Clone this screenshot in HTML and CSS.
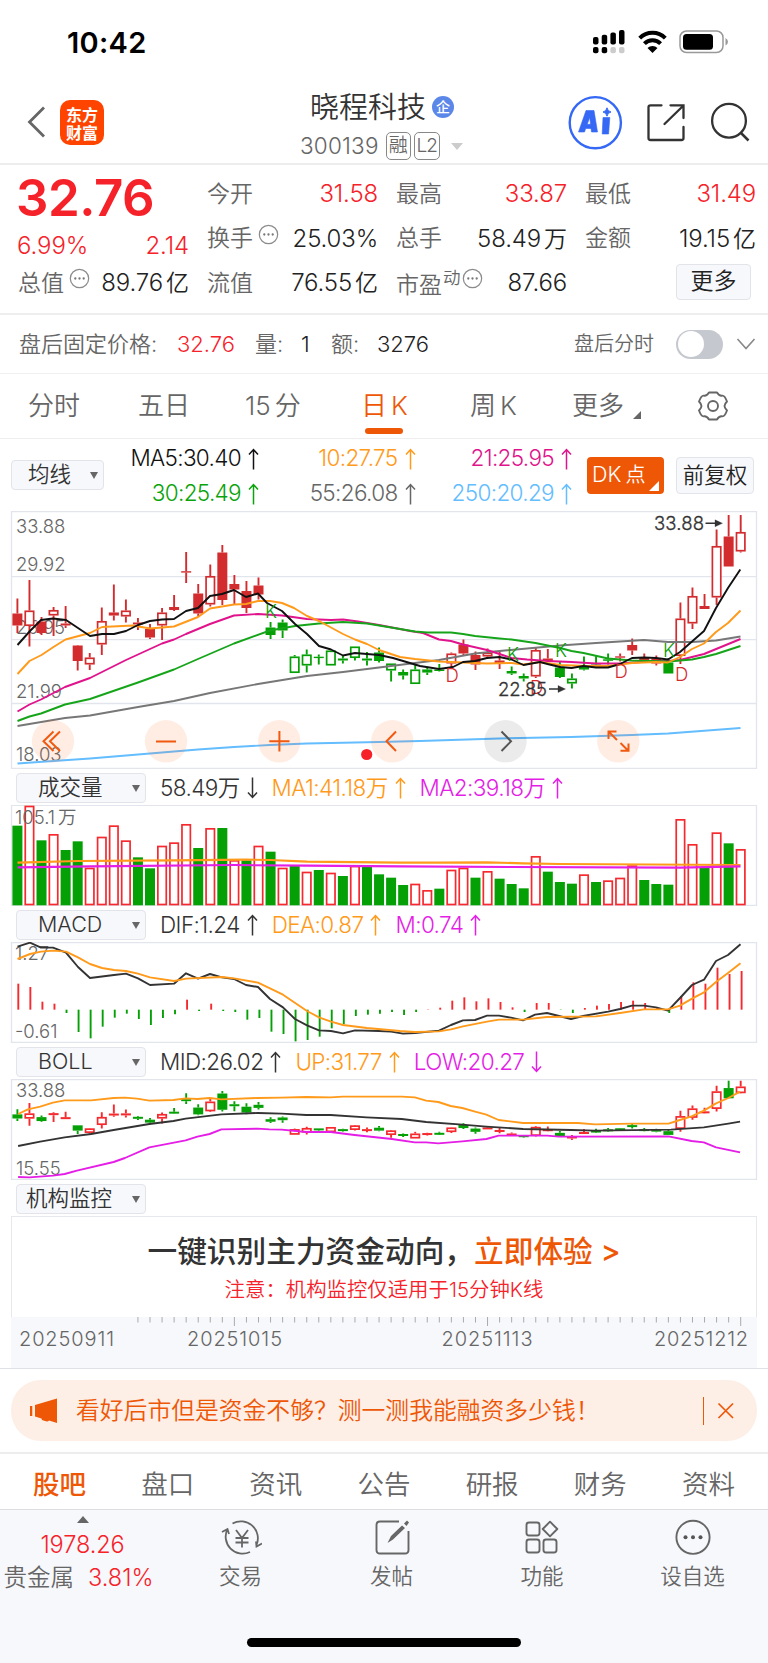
FILE: index.html
```html
<!DOCTYPE html>
<html lang="zh-CN">
<head>
<meta charset="utf-8">
<title>晓程科技 300139</title>
<link rel="stylesheet" href="styles.css">
</head>
<body>
<svg class="defs" width="0" height="0">
  <symbol id="up" viewBox="0 0 11 22"><path d="M5.5 21.500V1.500M1 6.500L5.500 1.500L10 6.500" fill="none" stroke="currentColor" stroke-width="1.500"/></symbol>
  <symbol id="down" viewBox="0 0 11 22"><path d="M5.500 .5V20.500M1 15.500L5.500 20.500L10 15.500" fill="none" stroke="currentColor" stroke-width="1.500"/></symbol>
  <symbol id="dots" viewBox="0 0 22 22"><circle cx="11" cy="11" r="9.600" fill="none" stroke="#8c8c8c" stroke-width="1.300"/><g fill="#777"><circle cx="6.600" cy="11" r="1.200"/><circle cx="11" cy="11" r="1.200"/><circle cx="15.400" cy="11" r="1.200"/></g></symbol>
</svg>

<div class="status">
  <span class="clock">10:42</span>
  <svg width="138" height="26" viewBox="592 29 138 26">
    <g><rect x="593" y="37" width="5.500" height="7.500" rx="2"/><rect x="601.700" y="34.700" width="5.500" height="9.800" rx="2"/><rect x="610.400" y="32.500" width="5.500" height="12" rx="2"/><rect x="619" y="30" width="5.500" height="14.500" rx="2"/>
    <rect x="593" y="47" width="5.500" height="6.300" rx="2"/><rect x="601.700" y="47" width="5.500" height="6.300" rx="2"/><rect x="610.400" y="47" width="5.500" height="6.300" rx="2" fill="#ccc"/><rect x="619" y="47" width="5.500" height="6.300" rx="2" fill="#ccc"/></g>
    <g fill="none" stroke="#000" stroke-width="4"><path d="M639.700 38.200A18 18 0 0 1 665.300 38.200"/><path d="M644.400 43.600A11.500 11.500 0 0 1 660.600 43.600"/></g>
    <path d="M652.500 53L647.500 48A7.200 7.200 0 0 1 657.500 48Z"/>
    <rect x="680" y="31" width="43" height="21.500" rx="6.500" fill="none" stroke="#999" stroke-width="1.500"/><rect x="683" y="34" width="30" height="15.800" rx="3.500"/><path d="M725.500 38Q728 39.500 728 41.800T725.500 45.600Z" fill="#999"/>
  </svg>
</div>

<header class="header">
  <div class="h-left">
    <svg width="19" height="32" viewBox="0 0 19 32"><path d="M17 1.500L2.500 16L17 30.500" fill="none" stroke="#666" stroke-width="2.800"/></svg>
    <div class="brand"><span>东方</span><span>财富</span></div>
  </div>
  <div class="h-mid">
    <div class="name">晓程科技<span class="corp">企</span></div>
    <div class="code">300139<span class="tag t1">融</span><span class="tag t2">L2</span><i class="caret"></i></div>
  </div>
  <div class="h-right">
    <svg width="182" height="56" viewBox="568 95 182 56" fill="none">
      <circle cx="595.300" cy="122.700" r="25.600" stroke="#3468f5" stroke-width="2.400"/>
      <path fill-rule="evenodd" d="M578.500 132L586 110.500H594L597.500 132H591.500L591 128.500H585.700L584.500 132ZM587.200 124.300H590.500L589.800 117.500ZM603 117.500H609.800L608.600 134H602.200Z" fill="#3468f5" stroke="#3468f5" stroke-width=".6" stroke-linejoin="round"/>
      <path d="M607 107.800Q607.600 111.400 611 112Q607.600 112.600 607 116.200Q606.400 112.600 603 112Q606.400 111.400 607 107.800Z" fill="#3468f5" stroke="#3468f5"/>
      <path d="M661.500 105.300H650.500Q648.500 105.300 648.500 107.300V138Q648.500 140 650.500 140H681.500Q683.500 140 683.500 138V127M670.500 105.300H683.500V118M683 106L664.500 124" stroke="#333" stroke-width="2.300" stroke-linecap="round"/>
      <circle cx="729" cy="120.700" r="16.900" stroke="#333" stroke-width="2.300"/><path d="M741 133L748.500 140.500" stroke="#333" stroke-width="2.500"/>
    </svg>
  </div>
</header>

<section class="quote">
  <div class="col">
    <div class="price">32.76</div>
    <div class="chg"><span>6.99%</span><span>2.14</span></div>
    <div class="row"><label>总值</label><svg class="dt"><use href="#dots"/></svg><b>89.76<u>亿</u></b></div>
  </div>
  <div class="col">
    <div class="row"><label>今开</label><b class="red">31.58</b></div>
    <div class="row"><label>换手</label><svg class="dt"><use href="#dots"/></svg><b>25.03%</b></div>
    <div class="row"><label>流值</label><b>76.55<u>亿</u></b></div>
  </div>
  <div class="col">
    <div class="row"><label>最高</label><b class="red">33.87</b></div>
    <div class="row"><label>总手</label><b>58.49<u>万</u></b></div>
    <div class="row"><label>市盈<sup>动</sup></label><svg class="dt d3"><use href="#dots"/></svg><b>87.66</b></div>
  </div>
  <div class="col">
    <div class="row"><label>最低</label><b class="red">31.49</b></div>
    <div class="row"><label>金额</label><b>19.15<u>亿</u></b></div>
    <div class="row end"><span class="btn">更多</span></div>
  </div>
</section>

<section class="after">
  <span class="g w1">盘后固定价格:</span><span class="red w2">32.76</span><span class="g w3">量:</span><span class="w4">1</span><span class="g w5">额:</span><span>3276</span>
  <span class="g fs">盘后分时</span><span class="toggle"></span>
  <svg width="20" height="12" viewBox="0 0 20 12"><path d="M1.500 1L10 10.500L18.500 1" fill="none" stroke="#888" stroke-width="1.600"/></svg>
</section>

<nav class="tabs">
  <span class="a">分时</span><span class="b">五日</span><span class="c">15<u>分</u></span><span class="on d">日<u>K</u></span><span class="e">周<u>K</u></span><span class="f">更多<i></i></span>
  <svg width="32" height="32" viewBox="-16 -16 32 32" fill="none" stroke="#666" stroke-width="1.900" stroke-linejoin="round"><path d="M-4-13.500H4Q6-10 9-10.300Q11.500-11 14-4.500Q11.500-2 11.500 0T14 4.500Q11.500 11 9 10.300Q6 10 4 13.500H-4Q-6 10-9 10.300Q-11.500 11-14 4.500Q-11.500 2-11.500 0T-14-4.500Q-11.500-11-9-10.300Q-6-10-4-13.500Z"/><circle r="5"/></svg>
</nav>

<section class="ma">
  <span class="select sm">均线<i></i></span>
  <div class="mas">
    <span class="k">MA5:30.40<svg class="ar"><use href="#up"/></svg></span><span class="o">10:27.75<svg class="ar"><use href="#up"/></svg></span><span class="p">21:25.95<svg class="ar"><use href="#up"/></svg></span>
    <span class="gr">30:25.49<svg class="ar"><use href="#up"/></svg></span><span class="g">55:26.08<svg class="ar"><use href="#up"/></svg></span><span class="bl">250:20.29<svg class="ar"><use href="#up"/></svg></span>
  </div>
  <span class="dk">DK<u>点</u><i></i></span>
  <span class="fq">前复权</span>
</section>

<svg class="chart" id="main" width="768" height="258" viewBox="0 511 768 258">
  <path class="frame" d="M11.500 511.700H756.500V768.300H11.500ZM11.500 576.700H756.500M11.500 639.700H756.500M11.500 703.500H756.500"/>
  <g class="axis"><text x="16" y="532.500">33.88</text><text x="16" y="570.500">29.92</text><text x="16" y="634">25.95</text><text x="16" y="697.500">21.99</text><text x="16" y="761">18.03</text></g>
  <g id="candles"></g>
  <g id="mainlines"></g>
  <g class="kd"><text x="265" y="617.500" class="gk">K</text><text x="507" y="661" class="gk">K</text><text x="555" y="657" class="gk">K</text><text x="663" y="656.500" class="gk">K</text>
  <text x="445.500" y="681.500">D</text><text x="530" y="693.500">D</text><text x="614.500" y="677.500">D</text><text x="675" y="680.500">D</text></g>
  <g class="mark"><text x="498" y="696" textLength="49">22.85</text><text x="654" y="530" textLength="50">33.88</text><path d="M549 689H560M705.500 523.300H717" stroke="#333" stroke-width="1.600"/><path d="M558 685.500L565.500 689L558 692.500ZM715 519.800L722.500 523.300L715 526.800Z"/></g>
  <g fill="#fd6f22" fill-opacity=".12"><circle cx="53" cy="741.300" r="21.200"/><circle cx="166" cy="741.300" r="21.200"/><circle cx="279.300" cy="741.300" r="21.200"/><circle cx="392.300" cy="741.300" r="21.200"/><circle cx="618.300" cy="741.300" r="21.200"/></g>
  <circle cx="505.500" cy="741.300" r="21.200" fill="#000" fill-opacity=".08"/>
  <g fill="none" stroke="#f05a10" stroke-width="2"><path d="M53.500 731.500L43.500 741.300L53.500 751M60 731.500L50 741.300L60 751M156 741.500H176M269.300 741.300H289.500M279.400 731V751.500M396 731.500L386.500 741.300L396 751M617 740L609 732M608.500 739V731.500H616.500M620.500 743L628 750.500M628.500 743.500V750.800H620.500"/><path d="M501.500 731.500L511 741.300L501.500 751" stroke="#555"/></g>
  <circle cx="366.700" cy="754.500" r="5.600" fill="#f6222a"/>
</svg>

<div class="ind"><span class="select">成交量<i></i></span><span class="k3">58.49万<svg class="ar"><use href="#down"/></svg></span><span class="o">MA1:41.18万<svg class="ar"><use href="#up"/></svg></span><span class="m">MA2:39.18万<svg class="ar"><use href="#up"/></svg></span></div>
<svg class="chart" width="768" height="101" viewBox="0 805 768 101">
  <path class="frame" d="M11.500 805.400H756.500V905.400H11.500Z"/><g id="vol"></g><text class="axis" x="15" y="823.500">105.1<tspan dx="3">万</tspan></text><g id="vollines"></g>
</svg>

<div class="ind"><span class="select">MACD<i></i></span><span class="k3">DIF:1.24<svg class="ar"><use href="#up"/></svg></span><span class="o">DEA:0.87<svg class="ar"><use href="#up"/></svg></span><span class="m">M:0.74<svg class="ar"><use href="#up"/></svg></span></div>
<svg class="chart" width="768" height="101" viewBox="0 942 768 101">
  <path class="frame" d="M11.500 942.500H756.500V1042.400H11.500Z"/><g class="axis"><text x="15" y="960">1.27</text><text x="15" y="1038">-0.61</text></g><g id="macd"></g>
</svg>

<div class="ind"><span class="select">BOLL<i></i></span><span class="k3">MID:26.02<svg class="ar"><use href="#up"/></svg></span><span class="o">UP:31.77<svg class="ar"><use href="#up"/></svg></span><span class="m">LOW:20.27<svg class="ar"><use href="#down"/></svg></span></div>
<svg class="chart" width="768" height="101" viewBox="0 1079 768 101">
  <path class="frame" d="M11.500 1079.500H756.500V1179.400H11.500Z"/><g class="axis"><text x="16" y="1097.300">33.88</text><text x="16" y="1175.300">15.55</text></g><g id="boll"></g>
</svg>

<div class="ind"><span class="select jg">机构监控<i></i></span></div>
<div class="promo"><p>一键识别主力资金动向，<em>立即体验 &gt;</em></p><small>注意：机构监控仅适用于15分钟K线</small></div>
<svg class="chart dates" width="768" height="51" viewBox="0 1317 768 51">
  <rect x="11" y="1317" width="746" height="51" fill="#f7f8fb"/><path id="ticks" stroke="#aaa" fill="none"/>
  <g><text x="19" y="1346" textLength="95">20250911</text><text x="187" y="1346" textLength="95">20251015</text><text x="441.500" y="1346" textLength="91">20251113</text><text x="654" y="1346" textLength="94">20251212</text></g>
</svg>

<div class="adwrap"><div class="ad">
  <svg width="29" height="26" viewBox="0 0 29 26" fill="#ee5706"><path d="M1 8H3.300V18H1ZM6 7L28 .5V25L20 22.500Q19 24 16 23L13 22L12.500 20.500L6 18.500Z"/></svg>
  <span>看好后市但是资金不够？测一测我能融资多少钱！</span><i></i>
  <svg width="18" height="18" viewBox="0 0 18 18"><path d="M1.500 1.500L16 16M16 1.500L1.500 16" stroke="#ee5706" stroke-width="1.700"/></svg>
</div></div>

<nav class="sub"><span class="on">股吧</span><span>盘口</span><span>资讯</span><span>公告</span><span>研报</span><span>财务</span><span>资料</span></nav>

<footer class="foot">
  <div class="bar">
    <div class="metal"><i></i><b>1978.26</b><span>贵金属<em>3.81%</em></span></div>
    <div class="it"><svg width="42" height="38" viewBox="220 1518 42 38" fill="none" stroke="#666" stroke-width="1.800"><path d="M232.500 1523.500A17 17 0 0 1 256.500 1545M250 1552A17 17 0 0 1 227.500 1529M222 1532L227.500 1529L229 1534M262 1543.500L256.500 1546.500L256 1541.500M236 1530L242 1538L248 1530M242 1538V1547.500M235.500 1538H248.500M235.500 1542.500H248.500"/></svg><span>交易</span></div>
    <div class="it"><svg width="42" height="38" viewBox="371 1518 42 38" fill="none" stroke="#666" stroke-width="1.900"><path d="M399 1521.500H380Q376.500 1521.500 376.500 1525V1550Q376.500 1553.500 380 1553.500H405Q408.500 1553.500 408.500 1550V1531"/><path d="M387.500 1543L391 1536L402 1525.500L405 1528L393 1539.500ZM404 1523.500L407 1520.500L409 1522.500L406.500 1526Z" fill="#666" stroke="none"/></svg><span>发帖</span></div>
    <div class="it"><svg width="42" height="38" viewBox="522 1518 42 38" fill="none" stroke="#666" stroke-width="1.900"><rect x="527.500" y="1522.500" width="13" height="13" rx="2.500"/><rect x="527.500" y="1539.500" width="13" height="13" rx="2.500"/><rect x="544.500" y="1539.500" width="13" height="13" rx="2.500"/><path d="M551 1521.700L558.300 1529L551 1536.300L543.700 1529Z" stroke-linejoin="round"/></svg><span>功能</span></div>
    <div class="it"><svg width="42" height="38" viewBox="672 1518 42 38"><circle cx="693" cy="1537.300" r="16.600" fill="none" stroke="#666" stroke-width="1.900"/><g fill="#555"><circle cx="685.500" cy="1537.300" r="2"/><circle cx="693" cy="1537.300" r="2"/><circle cx="700.500" cy="1537.300" r="2"/></g></svg><span>设自选</span></div>
  </div>
  <div class="home"></div>
</footer>
<script src="script.js"></script>
</body>
</html>
```
FILE: styles.css
```css
* { box-sizing: border-box; }
body { margin: 0; width: 768px; height: 1663px; background: #fff; color: #222; font-family: Inter, "Noto Sans CJK SC", sans-serif; font-size: 22px; line-height: 1; overflow: hidden; font-weight: 350; }
u, em, b, i { text-decoration: none; font-style: normal; font-weight: inherit; }
span, label { white-space: nowrap; }
.defs { display: block; }
svg { flex: none; }
.red { color: #f6222a; }
.g { color: #666; }
.status { height: 80px; display: flex; justify-content: space-between; padding: 28px 38px 0 67px; }
.clock { font-size: 29px; line-height: 30px; font-weight: 600; color: #000; letter-spacing: .3px; }
.status svg { margin-top: 1px; }

.header { height: 85px; display: flex; justify-content: space-between; border-bottom: 2px solid #ededed; }
.h-left { display: flex; padding: 20px 0 0 27px; width: 284px; }
.h-left svg { margin: 6px 14px 0 0; }
.brand { width: 44px; height: 45px; border-radius: 10px; background: #ff4400; color: #fff; font: 700 16px/18px "Noto Sans CJK SC", sans-serif; display: flex; flex-direction: column; align-items: center; justify-content: center; }
.h-mid { width: 200px; padding-top: 12px; }
.name { display: flex; align-items: center; height: 30px; font-size: 29px; padding-left: 26px; color: #333; }
.corp { width: 22px; height: 22px; border-radius: 50%; background: #5b87e9; color: #fff; font-size: 14px; line-height: 21px; text-align: center; font-weight: 500; margin-left: 6px; }
.code { display: flex; align-items: center; height: 28px; margin-top: 10px; padding-left: 16px; color: #666; letter-spacing: .2px; font-size: 22.500px; width: 190px; }
.tag { flex: none; height: 28px; border: 1.500px solid #888; border-radius: 5px; line-height: 25px; text-align: center; font-size: 19px; letter-spacing: 0; }
.t1 { width: 25px; margin-left: 7px; }
.t2 { width: 26px; margin-left: 3px; letter-spacing: -1px; }
.caret { border: 6.500px solid transparent; border-top: 7px solid #ccc; border-bottom: 0; margin-left: 11px; }
.h-mid { margin-left: 0; flex: none; }
.h-right { width: 200px; padding-top: 15px; flex: none; }
.h-left { flex: none; }
.header { justify-content: flex-start; }
.h-right { margin-left: 84px; }

.quote { height: 150px; display: grid; grid-template-columns: repeat(4, 171px); column-gap: 18px; padding: 7px 12px 0 18px; border-bottom: 2px solid #eee; font-size: 23px; }
.row { height: 44.5px; display: flex; align-items: center; }
.row label { color: #666; letter-spacing: 0; }
.row b { margin-left: auto; font-size: 24px; letter-spacing: -.15px; }
.row u { margin-left: 3px; letter-spacing: 0; font-size: 23px; }
.row.end { justify-content: flex-end; padding-right: 5px; }
.dt { width: 21px; height: 21px; margin: -9px 0 0 5px; }
.d3 { margin-left: 1px; }
sup { font-size: 17.500px; line-height: 1; vertical-align: 9px; margin-left: 1px; }
.price { height: 51px; font-size: 51px; line-height: 51px; font-weight: 600; color: #f6222a; letter-spacing: -.5px; margin-left: -2px; }
.chg { height: 38px; display: flex; justify-content: space-between; align-items: center; padding-top: 7px; color: #f6222a; font-size: 24px; letter-spacing: -.1px; margin-left: -1px; }
.btn { width: 75px; height: 36px; border: 1.500px solid #e2e4ea; border-radius: 4px; background: #f7f8fb; text-align: center; line-height: 33px; margin-top: -2px; }

.after { height: 59px; display: flex; align-items: center; padding-left: 19px; border-bottom: 1px solid #f0f0f0; font-size: 22px; letter-spacing: 0; }
.w1 { width: 158px; letter-spacing: 0; } .w2 { width: 78px; } .w3 { width: 46px; } .w4 { width: 30px; } .w5 { width: 46px; }
.fs { margin-left: auto; font-size: 20px; letter-spacing: 0; }
.toggle { width: 47px; height: 29px; border-radius: 15px; background: #c5c8ce; margin: 0 13px 0 22px; padding: 1.500px; }
.toggle::before { content: ""; display: block; width: 26px; height: 26px; border-radius: 50%; background: #fff; }
.after svg { margin-right: 12px; }

.tabs { height: 65px; display: grid; grid-template-columns: 110px 107px 116px 109px 102px 153px 1fr; align-items: center; padding-left: 28px; border-bottom: 1px solid #eee; color: #666; font-size: 26px; }
.tabs u { margin-left: 4px; }
.tabs .on { color: #ee5706; position: relative; }
.tabs .on::after { content: ""; position: absolute; left: 4px; top: 35px; width: 38px; height: 6px; border-radius: 3px; background: #ee5706; }
.tabs i { display: inline-block; border: 4.500px solid #666; border-left-color: transparent; border-top-color: transparent; margin-left: 9px; vertical-align: -4px; }
.tabs svg { margin-left: -28px; }

.ma { height: 72px; display: flex; padding-left: 11px; font-size: 22.500px; }
.select { display: flex; align-items: center; justify-content: space-between; width: 130px; height: 30px; border: 1.500px solid #e2e4ea; border-radius: 4px; background: #f7f8fb; color: #333; font-size: 21.500px; padding: 0 5px 0 21px; }
.select i { border: 4.500px solid transparent; border-top: 7.500px solid #666; border-bottom: 0; }
.select.sm { width: 93px; margin-top: 21px; padding-left: 16px; }
.mas { display: grid; grid-template-columns: 155px 156.500px 156.500px; grid-template-rows: 35px 35px; padding-top: 2px; width: 468px; height: 72px; letter-spacing: -.65px; }
.mas span { display: flex; align-items: center; justify-content: flex-end; }
.ar { width: 11px; height: 22px; margin-left: 7px; }
.k { color: #111; } .k3 { color: #333; } .o { color: #ff9a1a; } .p { color: #e0138c; } .gr { color: #0aa30a; } .bl { color: #63bdff; } .m { color: #e41ee6; }
.dk, .fq { height: 37px; margin-top: 18px; border-radius: 4px; line-height: 35px; font-size: 22px; }
.dk { width: 77px; margin-left: 15px; background: #ee5706; color: #fff; padding-left: 5px; position: relative; font-size: 21.500px; }
.dk u { margin-left: 4px; font-size: 20px; }
.dk i { position: absolute; right: 5px; bottom: 3px; border: 5.500px solid #fff; border-left-color: transparent; border-top-color: transparent; }
.fq { width: 78px; margin-left: 12px; border: 1.500px solid #e2e4ea; background: #f7f8fb; text-align: center; font-size: 21.500px; }

.chart { display: block; }
.frame { fill: none; stroke: #e3e5ed; stroke-width: 1.300; }
.axis { font-size: 18.500px; fill: #666; }
.kd { font-size: 18.500px; fill: #d32c2f; }
.kd .gk { fill: #05a005; }
.mark { font-size: 18.500px; fill: #333; stroke: #333; stroke-width: .3px; }
.ind { height: 36px; display: flex; align-items: center; gap: 14px; padding: 2px 0 0 16px; font-size: 22.500px; letter-spacing: -.6px; }
.ind .select { letter-spacing: 0; }
.ind .select.jg { padding-left: 9px; }
.ind > span:not(.select) { display: flex; align-items: center; }
.promo { height: 101px; margin: 0 11px; border: 1.500px solid #e6e8ee; border-bottom: 0; text-align: center; padding-top: 18px; }
.promo p { margin: 0; font-size: 29.700px; line-height: 32px; font-weight: 500; color: #333; white-space: nowrap; }
.promo em { color: #ee5706; font-weight: 500; }
.promo small { display: block; font-size: 20.400px; line-height: 24px; margin-top: 11px; color: #f6222a; }
.dates text { font-size: 20px; fill: #666; }

.adwrap { height: 84px; border-top: 1.500px solid #dfe1e6; padding: 11px 11px 0; }
.ad { height: 61px; border-radius: 30px; background: #fdeee6; color: #ee5706; display: flex; align-items: center; padding: 0 22px 0 18px; font-size: 23.800px; }
.ad span { margin-left: 18px; }
.ad i { width: 1.500px; height: 28px; background: #ee5706; margin: 0 13px 0 auto; }
.sub { height: 57px; display: flex; justify-content: space-between; align-items: center; padding: 6px 33px 0; border-top: 2px solid #ededed; font-size: 26.500px; color: #666; }
.sub .on { color: #ee5706; font-weight: 500; }
.foot { height: 154px; background: #f7f8fb; border-top: 1.500px solid #ddd; }
.bar { display: grid; grid-template-columns: 165px 151px 151px 150px 151px; height: 124px; }
.metal { display: flex; flex-direction: column; align-items: center; padding-top: 6px; }
.metal i { border: 6.500px solid transparent; border-bottom: 7px solid #666; border-top: 0; }
.metal b { color: #f6222a; font-size: 23.500px; margin-top: 10px; letter-spacing: -.1px; }
.metal span { font-size: 23.500px; color: #666; margin: 9px 0 0 -8px; }
.metal em { color: #f6222a; margin-left: 14px; letter-spacing: 0; }
.it { display: flex; flex-direction: column; align-items: center; padding-top: 8px; color: #666; font-size: 21.500px; }
.it span { margin-top: 10px; }
.home { width: 274px; height: 9px; border-radius: 5px; background: #000; margin: 4px auto 0 247px; }
```
FILE: script.js
```js
const X = i => 17.4 + i * 12.055;
const el = id => document.getElementById(id);
const RED = '#d32c2f', GREEN = '#05a005', HOT = '#f5292e';

// style, high, body top, body bottom, low
const candles = `R 598.5 613.5 625.5 633|r 580 610.5 626 646.5|R 617 621.5 633 635|r 607 610 615.5 636|R 606 623.5 625.5 628|R 645 645.5 661 670.5|r 653 657.5 664.5 670|r 607.5 621 644.5 655|r 584.5 612.5 615.5 620.5|r 599.5 610.5 616.5 622.5|R 618 622.5 624.5 630|R 624 629 637.5 639|r 608 612.5 625.5 640|R 595 607 610 611|R 552 571.2 572.6 583|R 584 593.5 613.5 616|r 564.5 576 604.5 606.5|R 545 552.5 600 605|R 575 584 589.5 604|R 581 591 608 613|R 577.5 585.5 594.5 599.5|G 622 627.5 635 639|G 619.5 622.5 630.5 638|g 655 656.5 673 673|g 649.5 654.5 665.5 672.5|G 654.5 656.7 658 664.5|g 650.5 650.5 665.5 665.5|G 655.5 658.5 660.5 663.5|g 646.5 646.5 658 660.5|G 652 658.5 660.5 665.5|G 647.5 652.5 661 662.5|g 663.5 663.5 670.5 681.5|G 669.5 672 675.5 679.5|g 664.5 669.5 684 684|g 667.5 669.5 672.5 675|G 664 669.5 671 671.5|r 652.5 653.5 663.5 668|R 639.5 644.5 653.5 656|R 651.5 655 664.5 670|r 648.5 652.5 656.5 658|R 650.5 660.5 663.5 669|G 666.5 671 673.5 675|G 673.5 676 678.5 681.5|r 647.5 650 676.5 678|R 649 658.5 661 661|G 662 667.5 677 678|g 673.5 678.5 683.5 688.5|g 656.5 666.5 669.5 670.5|G 655.5 663 664.5 665|G 653.5 659.3 660.8 664.5|R 653.5 656.3 657.7 661.5|R 638.5 645 650.5 655|R 653.5 657.5 661.5 663|R 655.5 658.5 663.5 665.5|G 658 662.5 673.5 673.5|r 602.5 618.5 656 664|r 587.5 596 623.5 629|R 594 606 609 609|r 529.5 546 597.5 605|R 515 536.5 566.5 566.5|r 515 532 551.5 552.5`
  .split('|').map(s => s.split(' ')).map(([t, ...v]) => [t, ...v.map(Number)]);

function candle(i, t, h, a, b, l, col) {
  const x = X(i), hollow = t === 'r' || t === 'g', bw = 10;
  const s = `<path d="M${x} ${h}V${a}M${x} ${b}V${l}" stroke="${col}" stroke-width="1.9"/>`;
  if (hollow && b - a > 2) return s + `<rect x="${x - bw / 2 + .8}" y="${a + .8}" width="${bw - 1.6}" height="${b - a - 1.6}" fill="#fff" stroke="${col}" stroke-width="1.7"/>`;
  return s + `<rect x="${x - bw / 2}" y="${a}" width="${bw}" height="${Math.max(b - a, 1.4)}" fill="${col}"/>`;
}
el('candles').innerHTML = candles.map(([t, h, a, b, l], i) => candle(i, t, h, a, b, l, t.toLowerCase() === 'r' ? RED : GREEN)).join('');

const line = (pts, col, fx = x => x, fy = y => y, w = 1.9) =>
  `<polyline fill="none" stroke="${col}" stroke-width="${w}" stroke-linejoin="round" points="${pts.trim().split(/\s+/).map(p => { const [x, y] = p.split(',').map(Number); return fx(x) + ',' + fy(y); }).join(' ')}"/>`;

el('mainlines').innerHTML =
  line('17.5,763.5 90,758.5 162,752.5 198,749.5 234,747 270,745 307,743.5 379,742 420,741 499,738.5 571,737 632,735 668,733.5 740.5,728', '#63bdff') +
  line('17.5,726 65,718 90,715.5 138,707 174,701 210,693 258,684 307,676 343,672 379,667.5 415,663 439,660 475,653.5 499.500,651 560,645.5 596,643 644,640 668,642 692,642 716,640.5 740.5,636.5', '#777') +
  line('17.5,711.5 29.5,704.5 41,699.5 65,687 90,678 126,660 162,643.5 174,639.5 186,634 210,624 234,615.5 258,614 282,615.5 307,619 331,620 343,619.5 358,621.5 379,625 400,629 410,631 423,633 439,639.5 451,641 463,644.5 487,650 499.5,654 511.5,658 527,659.5 547.5,661 571.5,662 596,663.5 620,663.5 656,661 668,661 680,660 692,657 704,654 740.5,639', '#e0138c') +
  line('17.5,721 29.5,716.5 41,713.5 65,704.5 90,699 138,682.5 174,669.5 198,659 234,643.5 270,630.5 295,626 319,623.5 343,622 367,623.5 400,629 415,631.5 427,632.5 451,632.5 463,634 475,636 499.5,638.5 511.5,639.5 535.5,643 560,648 571.5,651 583.5,653 608,658.5 632,660.5 668,661.5 692,659.5 704,657 716,654 740.5,646', '#16a51a') +
  line('17.5,674 29.5,661 41.5,655 53.5,647 65.5,639.5 90,633 102,627 133,625.5 150,628.5 174,626.5 198,617 210,608.5 234,604.5 246,604 258,601 270,601 282,603 294,608 307,616 319,621 343,634 355,639.5 367,644 379,650 400,657 415,659 439,661.5 463,662.5 487,663.5 511.5,663 523.5,664.5 540,662 560,665 587,666 608,666 632,663 656,662 668,662.5 680,657 692,649 704,643.5 716,632 728,623 740.5,610.5', '#ff9a1a') +
  line('17.5,645 30,631 41,620 53,618.500 66,620 78,628 90,636 102,634 114,634 126,631 138,625 150,621 162,619.5 174,619 186,611 198,608 210,596 222,594 234,590 246,597 258,593.5 267,603 282,611 295,624 307,634 319,646 331,649.5 343,655.5 355,653 379,655 393,658 420,666 439,669 453,667 463,662 475,661 487,658 499.5,657 511.5,659.5 523.5,665 540,662 547.5,664 560,667 571.5,668 583.5,666 596,667.5 608,667.5 620,664 632,658 644,657.5 656,658 668,659.5 680,652 692,641.5 704,631 716,608 728,588 740.3,569.5', '#111');

// volume bars: letter = direction, number = bar top in thirds of a pixel
const vol = 'G182,r123,G226,r208,G255,G229,r309,r216,r182,r227,G277,G310,r243,r233,r178,G249,r190,G189,r286,G286,r243,G260,r309,G303,r321,G315,r324,G333,r303,G305,G328,G338,G360,r357,r376,G371,r315,r309,G338,r319,G341,G357,G370,r274,G320,G351,G356,r329,G351,r347,r339,r302,G345,G357,G359,r163,r238,G309,r203,G235,r253'.split(',');
el('vol').innerHTML = vol.map((s, i) => {
  const y = 765 + s.slice(1) / 3, x = X(i) - 5;
  return s[0] === 'G' ? `<rect x="${x}" y="${y}" width="10" height="${905.3 - y}" fill="${GREEN}"/>`
    : `<rect x="${x + .8}" y="${y + .5}" width="8.400" height="${904 - y}" fill="#fff" stroke="${HOT}" stroke-width="1.7"/>`;
}).join('');
const sub = v => 765 + v / 3;
el('vollines').innerHTML =
  line('17.5,293 78,288 174,286 246,284 270,285 307,290 400,293 439,293 487,292 523,295 560,297 740.5,300', '#ff9a1a', undefined, sub, 2.1) +
  line('17.5,307 90,304 234,300 307,302 400,304 511,306 680,308 740.5,304', '#e41ee6', undefined, sub, 2.1);

const hist = [656,666,710,716,744,801,820,785,758,746,762,780,759,748,704,738,716,738,741,764,759,800,807,829,825,815,790,778,753,749,746,741,750,741,733,728,707,697,709,700,711,727,741,714,714,735,744,729,722,717,711,707,714,728,744,693,652,656,608,627,618];
el('macd').innerHTML = hist.map((v, i) => `<path d="M${X(i) + .9} ${sub(734)}V${sub(v)}" stroke="${v < 734 ? HOT : GREEN}" stroke-width="1.9"/>`).join('') +
  line('17.5,545 30,533 41,548 53,548 66,563 78,606 90,639 114,630 126,626 138,640 150,660 174,656 186,625 198,641 210,627 222,637 234,642 246,660 258,666 270,702 283,727 295,762 307,781 319,796 331,798 343,805 355,796 379,798 391,800 403,806 415,804 439,797 451,780 463,766 475,765 487,752 499,752 511,758 523,766 535,749 547,744 559,753 571,762 583,753 608,740 620,732 632,722 644,722 656,727 668,737 680,699 692,660 704,644 716,588 728,570 740.5,538', '#333', undefined, sub, 1.9) +
  line('17.5,582 30,567 41,560 53,557 66,560 78,577 90,597 102,609 114,615 126,618 138,626 150,637 174,648 186,641 222,636 234,640 258,653 270,670 283,689 307,738 319,757 331,770 343,780 367,789 400,798 415,801 439,799 451,793 463,784 487,770 499,764 523,764 547,756 596,754 620,744 644,733 668,733 680,722 692,701 704,682 716,651 728,624 740.5,595', '#ff9a1a', undefined, sub, 1.9);

const dir = 'GrGRRGrrRRGGrGGGrGGGGGGrrGrGrRGrGrRGrGGRRRGrRGrRGGGGGGGrrRrGr';
const by = y => 1080.7 + (y - 515) * .342;
const bx = x => x / 2.0417, bv = v => 1040 + v / 3;
el('boll').innerHTML = candles.map(([, h, a, b, l], i) => {
  let p = by(a), q = by(b);
  const c = (p + q) / 2;
  if (q - p < 2) { p = c - 1; q = c + 1; }
  else if (dir[i] === 'r' && q - p < 4.5) { p = c - 2.3; q = c + 2.3; }
  return candle(i, dir[i] === 'r' && q - p > 2.2 ? 'r' : 'R', by(h), p, q, by(l), dir[i] === 'G' ? GREEN : HOT);
}).join('') +
  line('37,222 57,208 82,200 108,188 132,181 186,181 232,174 255,173 280,176 305,182 354,180 379,175 403,177 428,174 452,178 526,174 575,173 625,171 675,172 700,170 820,170 847,172 870,182 895,186 920,198 944,204 970,215 993,224 1018,240 1068,249 1180,249 1215,253 1290,251 1365,251 1388,240 1412,229 1437,212 1462,190 1487,174 1511,155', '#ff9a1a', bx, bv, 1.9) +
  line('37,318 82,305 132,292 186,282 232,270 305,252 354,243 379,236 452,223 526,219 575,221 625,225 675,225 748,232 820,237 870,246 944,254 993,260 1068,267 1166,270 1215,272 1370,269 1437,262 1487,251 1511,245', '#333', bx, bv, 1.9) +
  line('37,411 60,412 108,407 132,402 157,392 232,366 255,354 305,322 379,301 403,290 428,282 452,268 526,266 550,268 575,269 625,276 675,276 724,285 800,297 847,307 870,307 895,310 944,304 993,297 1018,287 1117,287 1141,290 1365,289 1412,303 1437,307 1462,322 1511,337', '#e41ee6', bx, bv, 1.9);

let d = '';
for (let i = 10; i <= 60; i++) d += `M${X(i)} 1317v${[18, 39, 60].includes(i) ? 9 : 5.5}`;
el('ticks').setAttribute('d', d);
```
